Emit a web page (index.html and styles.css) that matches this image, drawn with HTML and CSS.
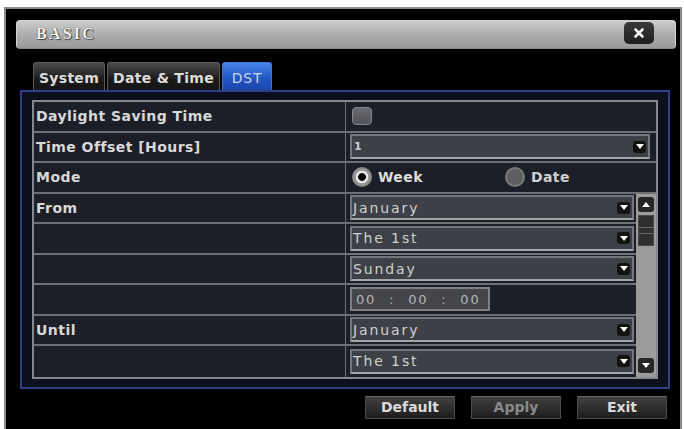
FILE: index.html
```html
<!DOCTYPE html>
<html>
<head>
<meta charset="utf-8">
<title>BASIC - DST</title>
<link rel="stylesheet" href="styles.css">
</head>
<body>
<div class="window">
  <div class="titlebar">
    <span class="title">BASIC</span>
    <span class="close"><svg width="12" height="12" viewBox="0 0 12 12"><path d="M2.5 2.5L9.5 9.5M9.5 2.5L2.5 9.5" stroke="#f2f2f2" stroke-width="2.6" stroke-linecap="round"/></svg></span>
  </div>
  <div class="tabs">
    <div class="tab t-system">System</div>
    <div class="tab t-date">Date &amp; Time</div>
    <div class="tab t-dst active">DST</div>
  </div>
  <div class="panel">
    <div class="grid">
      <div class="label">Daylight Saving Time</div>
      <div class="val wide"><span class="check"></span></div>

      <div class="label">Time Offset [Hours]</div>
      <div class="val wide">
        <div class="select"><span class="txt one">1</span><span class="arrow"><svg width="8" height="5" viewBox="0 0 8 5"><path d="M0 0H8L4 5Z" fill="#fff"/></svg></span></div>
      </div>

      <div class="label">Mode</div>
      <div class="val wide">
        <div class="radio first"><span class="dot on"></span>Week</div>
        <div class="radio off"><span class="dot"></span>Date</div>
      </div>

      <div class="label">From</div>
      <div class="val">
        <div class="select"><span class="txt">January</span><span class="arrow"><svg width="8" height="5" viewBox="0 0 8 5"><path d="M0 0H8L4 5Z" fill="#fff"/></svg></span></div>
      </div>

      <div class="scroll">
        <span class="sbtn"><svg width="8" height="5" viewBox="0 0 8 5"><path d="M0 5H8L4 0Z" fill="#fff"/></svg></span>
        <span class="thumb"><i></i><i></i></span>
        <span class="spacer"></span>
        <span class="sbtn"><svg width="8" height="5" viewBox="0 0 8 5"><path d="M0 0H8L4 5Z" fill="#fff"/></svg></span>
      </div>

      <div class="label"></div>
      <div class="val">
        <div class="select"><span class="txt">The 1st</span><span class="arrow"><svg width="8" height="5" viewBox="0 0 8 5"><path d="M0 0H8L4 5Z" fill="#fff"/></svg></span></div>
      </div>

      <div class="label"></div>
      <div class="val">
        <div class="select"><span class="txt">Sunday</span><span class="arrow"><svg width="8" height="5" viewBox="0 0 8 5"><path d="M0 0H8L4 5Z" fill="#fff"/></svg></span></div>
      </div>

      <div class="label"></div>
      <div class="val">
        <div class="time">00 : 00 : 00</div>
      </div>

      <div class="label">Until</div>
      <div class="val">
        <div class="select"><span class="txt">January</span><span class="arrow"><svg width="8" height="5" viewBox="0 0 8 5"><path d="M0 0H8L4 5Z" fill="#fff"/></svg></span></div>
      </div>

      <div class="label last"></div>
      <div class="val last">
        <div class="select"><span class="txt">The 1st</span><span class="arrow"><svg width="8" height="5" viewBox="0 0 8 5"><path d="M0 0H8L4 5Z" fill="#fff"/></svg></span></div>
      </div>
    </div>
  </div>
  <div class="buttons">
    <div class="btn">Default</div>
    <div class="btn disabled">Apply</div>
    <div class="btn">Exit</div>
  </div>
</div>
</body>
</html>
```

FILE: styles.css
```css
html, body {
  margin: 0;
  padding: 0;
  background: #ffffff;
  font-family: "DejaVu Sans", "Liberation Sans", sans-serif;
}

.window {
  margin: 7px 2px 0 4px;
  height: 422px;
  box-sizing: border-box;
  border: 2px solid #8c8c8c;
  border-bottom: 0;
  background: #000;
  padding: 11px 4px 0 10px;
  display: flex;
  flex-direction: column;
}

/* title bar */
.titlebar {
  height: 29px;
  flex: none;
  box-sizing: border-box;
  border-radius: 4px;
  border: 1px solid #d2d2d2;
  border-bottom-color: #8a8a8a;
  background: linear-gradient(#cdcdcd, #b0b0b0 45%, #999999);
  display: flex;
  align-items: center;
  justify-content: space-between;
  padding: 0 21px 0 19px;
}
.title {
  font-family: "Liberation Serif", serif;
  font-weight: bold;
  font-size: 16px;
  letter-spacing: 2.2px;
  color: #f2f2f2;
  text-shadow: 0 0 1px #222, 1px 1px 1px #444;
  margin-bottom: 2px;
}
.close {
  width: 30px;
  height: 22px;
  border-radius: 5px;
  background: linear-gradient(#3a3a3a, #1e1e1e);
  display: flex;
  align-items: center;
  justify-content: center;
  margin-bottom: 4px;
}

/* tabs */
.tabs {
  display: flex;
  gap: 2px;
  height: 28px;
  margin: 13px 0 0 17px;
  flex: none;
}
.tab {
  box-sizing: border-box;
  height: 28px;
  border: 1px solid #5a5a5a;
  border-bottom: 0;
  border-radius: 3px 3px 0 0;
  background: linear-gradient(#4a4a4a, #1c1c1c 60%, #141414);
  color: #dcdcdc;
  font-weight: bold;
  font-size: 14px;
  letter-spacing: 0.3px;
  display: flex;
  align-items: center;
  justify-content: center;
  padding-top: 3px;
}
.t-system { width: 72px; }
.t-date { width: 113px; }
.t-dst { width: 50px; }
.tab.active {
  border-color: #3f74d6;
  background: linear-gradient(#4a86e8, #2456c4 55%, #1b46ad);
  color: #c9d6ee;
  font-weight: normal;
  letter-spacing: 0.8px;
}

/* panel */
.panel {
  flex: none;
  margin: 0 6px 0 4px;
  border: 2px solid #2e3f88;
  background: #0c0f1e;
  padding: 8px 10px;
}
.grid {
  display: grid;
  grid-template-columns: 311px 291px 20px;
  grid-template-rows: repeat(9, 30.5px);
  border: 2px solid #86888c;
  background: #1d1f28;
}
.label {
  grid-column: 1;
  box-sizing: border-box;
  border-bottom: 2px solid #6e7075;
  padding-left: 2px;
  display: flex;
  align-items: center;
  color: #d8d8d8;
  font-weight: bold;
  font-size: 14px;
  letter-spacing: 0.45px;
  white-space: nowrap;
}
.val {
  grid-column: 2;
  box-sizing: border-box;
  border-left: 1px solid #6e7075;
  border-bottom: 2px solid #6e7075;
  padding: 0 2px 0 4px;
  display: flex;
  align-items: center;
  min-width: 0;
}
.val.wide {
  grid-column: 2 / 4;
  padding-right: 6px;
}
.label.last, .val.last {
  border-bottom: 0;
}

.check {
  width: 20px;
  height: 18px;
  margin-left: 2px;
  box-sizing: border-box;
  border-radius: 4px;
  border: 1px solid #85878c;
  background: linear-gradient(#6a6c72, #505258);
}

.select {
  flex: 1;
  height: 25px;
  box-sizing: border-box;
  border: 2px solid #74767b;
  border-bottom-color: #a3a5a9;
  background: #3e4047;
  display: flex;
  align-items: center;
  justify-content: space-between;
  padding: 0 2px 0 1px;
}
.txt {
  color: #d0d0d0;
  font-size: 14px;
  letter-spacing: 1.9px;
}
.txt.one { font-size: 11px; font-weight: bold; padding-left: 1px; letter-spacing: 0; }
.arrow {
  width: 13px;
  height: 12px;
  border-radius: 3px;
  background: #131313;
  display: flex;
  align-items: center;
  justify-content: center;
}

.radio {
  display: flex;
  align-items: center;
  gap: 6px;
  color: #dedede;
  font-weight: bold;
  font-size: 14px;
  letter-spacing: 0.4px;
  margin-left: 2px;
}
.radio.first { width: 151px; }
.radio.off { color: #cfcfcf; }
.dot {
  width: 20px;
  height: 20px;
  box-sizing: border-box;
  border-radius: 50%;
  border: 2px solid #7a7a7a;
  background: #5e5f62;
}
.dot.on {
  background: radial-gradient(circle, #050505 0 3.5px, #e4e4e4 4.2px 6px, #9a9a9a 6.6px);
  border-color: #8a8a8a;
}

.time {
  width: 140px;
  height: 24px;
  box-sizing: border-box;
  border: 2px solid #7e8085;
  background: #44464c;
  color: #b4b4b4;
  font-size: 13px;
  letter-spacing: 1.8px;
  word-spacing: 7px;
  white-space: pre;
  display: flex;
  align-items: center;
  padding-left: 4px;
}

.scroll {
  grid-column: 3;
  grid-row: 4 / span 6;
  background: #9b9b9b;
  display: flex;
  flex-direction: column;
  align-items: center;
  padding: 3px 0 4px;
}
.sbtn {
  width: 16px;
  height: 15px;
  border-radius: 3px;
  background: #262626;
  display: flex;
  align-items: center;
  justify-content: center;
  flex: none;
}
.thumb {
  width: 16px;
  height: 31px;
  margin-top: 3px;
  box-sizing: border-box;
  border: 1px solid #4a4a4a;
  background: #2f2f2f;
  display: flex;
  flex-direction: column;
  justify-content: center;
  gap: 5px;
  flex: none;
}
.thumb i {
  display: block;
  height: 1px;
  background: #6a6a6a;
}
.spacer { flex: 1; }

/* buttons */
.buttons {
  display: flex;
  justify-content: flex-end;
  gap: 16px;
  margin: 7px 9px 0 0;
}
.btn {
  width: 90px;
  height: 23px;
  box-sizing: border-box;
  border: 1px solid #4c4c4c;
  border-top-color: #6a6a6a;
  background: linear-gradient(#404040, #1e1e1e);
  color: #dadada;
  font-weight: bold;
  font-size: 14px;
  display: flex;
  align-items: center;
  justify-content: center;
}
.btn.disabled { color: #8a8a8a; }
```
